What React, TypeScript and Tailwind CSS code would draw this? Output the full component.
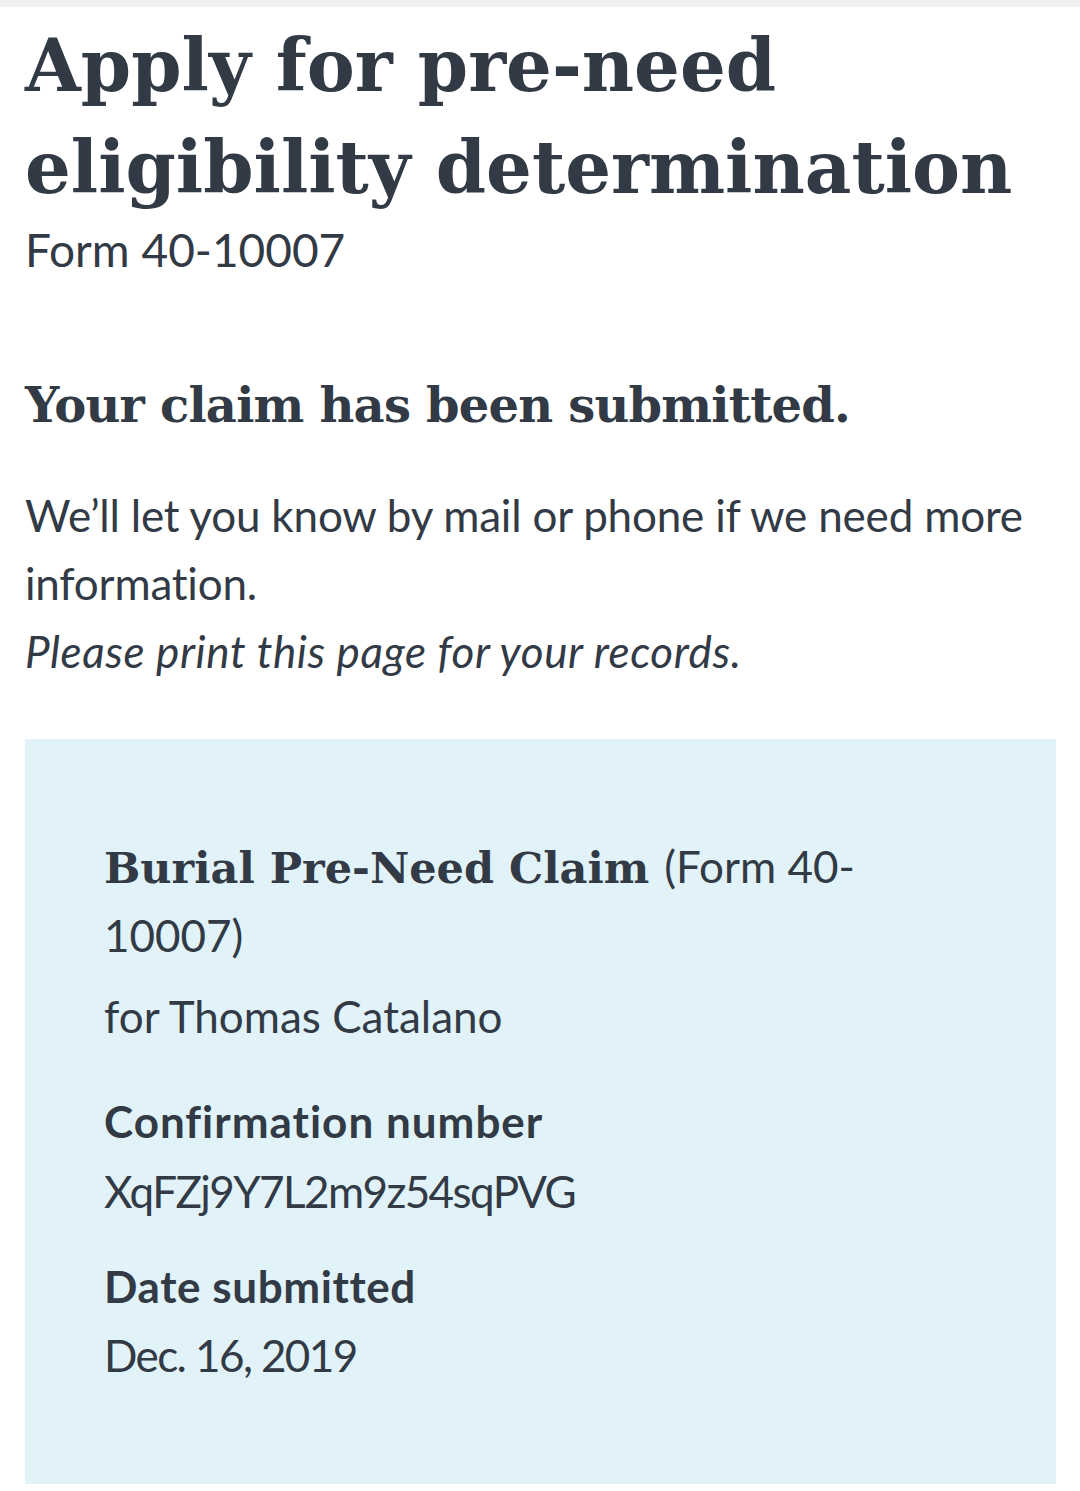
export default function App() {
  return (
    <div className="min-h-[1491px] bg-white text-[#323a45]">
      <div className="h-[7px] bg-[#f1f1f1]" />
      <div className="pl-[25px] pr-[24px]">
        <h1 className="mt-[8px] font-['DejaVu_Serif',serif] text-[72px] font-bold leading-[102px]">
          Apply for pre-need eligibility determination
        </h1>
        <div className="mt-[1px] font-['Lato',sans-serif] text-[46px] leading-[60px]">Form 40-10007</div>
        <h2 className="mt-[93px] font-['DejaVu_Serif',serif] text-[48px] font-bold leading-[64px] tracking-[-0.8px]">
          Your claim has been submitted.
        </h2>
        <div className="mt-[44px] font-['Lato',sans-serif] text-[44px] leading-[68px]">
          <p className="tracking-[-0.2px]">We’ll let you know by mail or phone if we need more information.</p>
          <p className="italic tracking-[0.6px]">Please print this page for your records.</p>
        </div>
        <div className="mt-[54px] h-[745px] bg-[#e1f3f8] pl-[79px] pr-[79px] pt-[94px] font-['Lato',sans-serif] text-[44px] leading-[67px]">
          <h3 className="font-['DejaVu_Serif',serif] text-[43px] font-bold leading-[67px]">
            Burial Pre-Need Claim{" "}
            <span className="font-['Lato',sans-serif] text-[44px] font-normal">
              (Form 40-
              <br />
              10007)
            </span>
          </h3>
          <p className="mt-[12px]">for Thomas Catalano</p>
          <p className="mt-[38px] font-bold tracking-[1px]">Confirmation number</p>
          <p className="mt-[3px] tracking-[-1.6px]">XqFZj9Y7L2m9z54sqPVG</p>
          <p className="mt-[28px] font-bold tracking-[0.6px]">Date submitted</p>
          <p className="mt-[2px] tracking-[-1.6px]">Dec. 16, 2019</p>
        </div>
      </div>
    </div>
  );
}
